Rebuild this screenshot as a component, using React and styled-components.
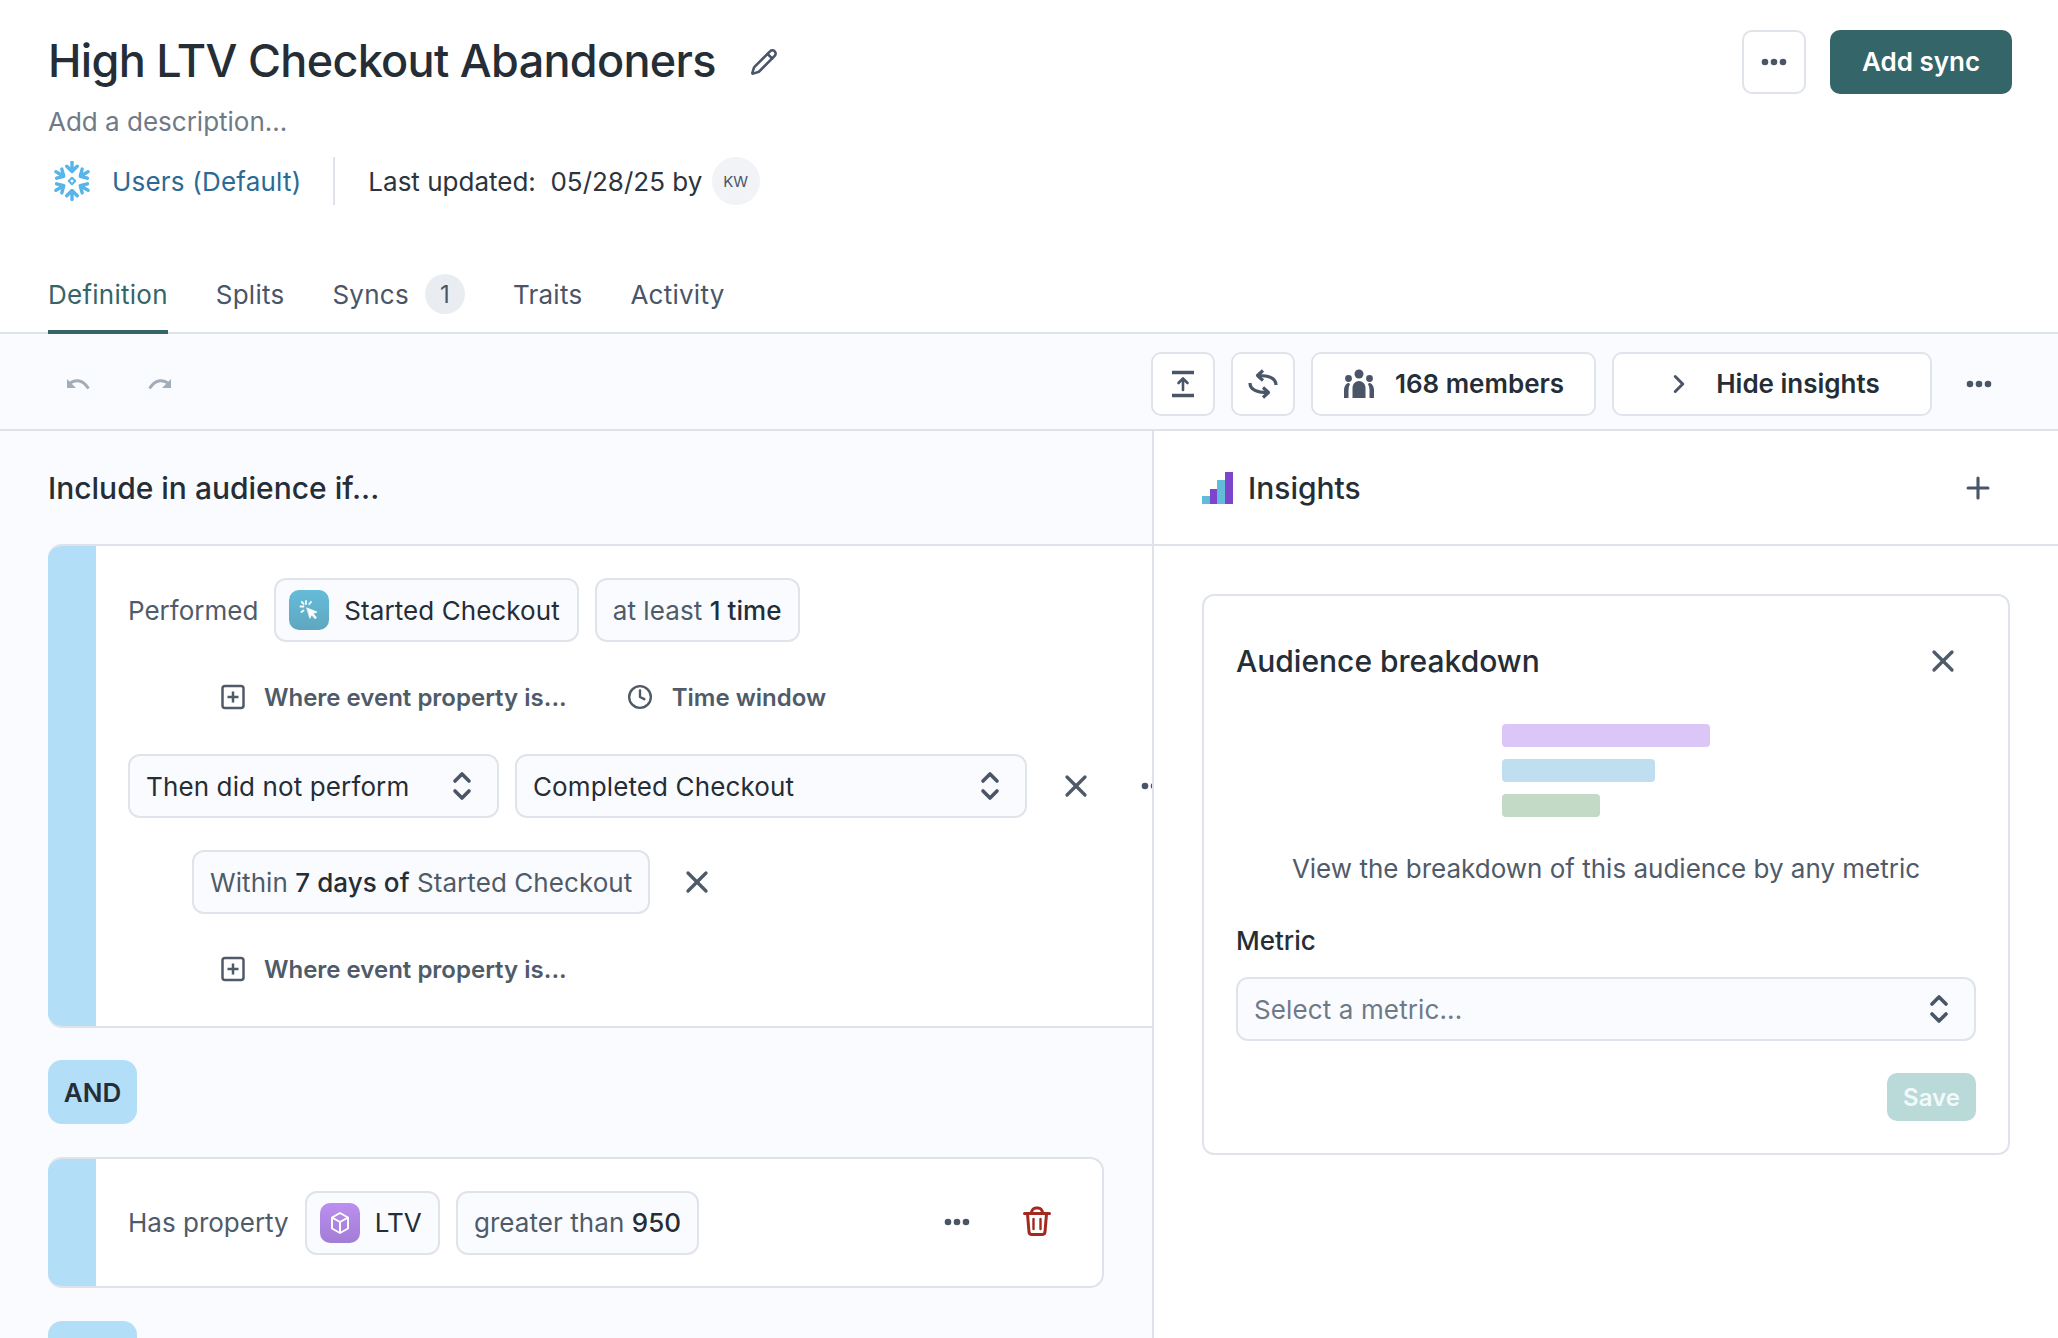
import { createGlobalStyle, styled } from "styled-components";
import { Plus, X, ChevronRight, Pencil, Clock } from "lucide-react";

const GlobalStyle = createGlobalStyle`
  html, body { margin: 0; padding: 0; background: #fff; }
  * { box-sizing: border-box; }
  body { font-family: "Inter", "Liberation Sans", sans-serif; color: #252d36; }
`;

const Page = styled.div`
  width: 2058px;
  height: 1338px;
  overflow: hidden;
  background: #fff;
`;

const Header = styled.header`
  padding: 30px 46px 0 48px;
`;

const TitleRow = styled.div`
  display: flex;
  justify-content: space-between;
  align-items: center;
  height: 64px;
`;

const TitleGroup = styled.div`
  display: flex;
  align-items: center;
  gap: 34px;
  color: #4a5568;
`;

const Title = styled.h1`
  margin: 0 0 3px;
  font-size: 45px;
  font-weight: 500;
  letter-spacing: -0.7px;
  color: #252d36;
`;

const Actions = styled.div`
  display: flex;
  gap: 24px;
`;

const OutlineButton = styled.button`
  display: flex;
  align-items: center;
  justify-content: center;
  gap: ${p => p.$gap || 0}px;
  width: ${p => p.$width || 64}px;
  height: 64px;
  padding: 0;
  border: 2.5px solid #dfe4eb;
  border-radius: 10px;
  background: #fff;
  font: 600 26px "Inter", sans-serif;
  color: #252d36;
  svg { color: #4a5568; flex: none; }
`;

const PrimaryButton = styled.button`
  width: 182px;
  height: 64px;
  padding: 0 0 2px;
  border: 0;
  border-radius: 10px;
  background: #336569;
  color: #fff;
  font: 600 26px "Inter", sans-serif;
`;

const Description = styled.div`
  margin-top: 12px;
  font-size: 26px;
  line-height: 32px;
  color: #6f7a87;
`;

const MetaRow = styled.div`
  display: flex;
  align-items: center;
  height: 48px;
  margin-top: 19px;
  font-size: 26px;
`;

const SourceLink = styled.span`
  display: flex;
  align-items: center;
  gap: 20px;
  padding-left: 4px;
  letter-spacing: 0.2px;
  color: #2b6a94;
`;

const MetaDivider = styled.span`
  width: 2px;
  height: 48px;
  margin: 0 33px 0 32px;
  background: #dfe4eb;
`;

const Updated = styled.span`
  display: flex;
  align-items: center;
  gap: 16px;
  white-space: pre;
  color: #2c343e;
`;

const Avatar = styled.span`
  display: flex;
  align-items: center;
  justify-content: center;
  width: 48px;
  height: 48px;
  margin-left: -14px;
  border-radius: 50%;
  background: #f1f3f7;
  font-size: 15px;
  color: #4a5568;
`;

const Tabs = styled.nav`
  display: flex;
  gap: 48px;
  height: 65px;
  margin: 64px -46px 0 -48px;
  padding-left: 48px;
  border-bottom: 2px solid #dee3ea;
`;

const Tab = styled.div`
  display: flex;
  align-items: center;
  gap: 16px;
  height: 65px;
  padding-bottom: 11px;
  font-size: 26px;
  letter-spacing: 0.25px;
  color: ${p => (p.$active ? "#336569" : "#4a5568")};
  border-bottom: 4px solid ${p => (p.$active ? "#336569" : "transparent")};
`;

const TabCount = styled.span`
  display: flex;
  align-items: center;
  justify-content: center;
  width: 40px;
  height: 40px;
  border-radius: 50%;
  background: #e9edf2;
  font-size: 24px;
  color: #4a5568;
`;

const Toolbar = styled.div`
  display: flex;
  align-items: center;
  height: 97px;
  padding: 4px 65px 0 66px;
  background: #fafbfe;
  border-bottom: 2px solid #dee3ea;
`;

const HistoryGroup = styled.div`
  display: flex;
  gap: 58px;
  margin-right: auto;
  color: #a3adb8;
`;

const ToolGroup = styled.div`
  display: flex;
  align-items: center;
  gap: 16px;
`;

const MoreSlot = styled.span`
  display: flex;
  margin-left: 33px;
`;

const Body = styled.div`
  display: grid;
  grid-template-columns: 1154px 1fr;
`;

const LeftPanel = styled.section`
  height: 908px;
  padding-left: 48px;
  overflow: hidden;
  background: #fafbfe;
  border-right: 2px solid #dee3ea;
`;

const PanelHeader = styled.div`
  display: flex;
  align-items: center;
  justify-content: space-between;
  height: ${p => p.$height}px;
  font-size: 30px;
  font-weight: 500;
`;

const RightPanel = styled.section`
  background: #fff;
`;

const InsightsHeader = styled(PanelHeader)`
  padding: 0 63px 0 48px;
  border-bottom: 2px solid #dee3ea;
  color: #4a5568;
`;

const InsightsTitle = styled.div`
  display: flex;
  align-items: center;
  gap: 15px;
  font-weight: 500;
  color: #252d36;
`;

const ConditionCard = styled.div`
  display: flex;
  overflow: hidden;
  background: #fff;
  border-radius: ${p => (p.$open ? "14px 0 0 14px" : "14px")};
  border: 2px solid #dee3ea;
  border-width: ${p => (p.$open ? "2px 0 2px 0" : "2px 2px 2px 0")};
  width: ${p => (p.$open ? "auto" : "1056px")};
  height: ${p => p.$height}px;
`;

const ColorStrip = styled.div`
  flex: none;
  width: 48px;
  margin: -2px 0;
  background: #b2def7;
`;

const ConditionBody = styled.div`
  flex: 1;
  min-width: 0;
  padding: 32px 0 0 32px;
`;

const Row = styled.div`
  display: flex;
  align-items: center;
  gap: 16px;
  white-space: nowrap;
  margin-top: ${p => p.$top || 0}px;
  padding-left: ${p => p.$indent || 0}px;
`;

const FieldLabel = styled.span`
  font-size: 26px;
  color: #4f5b69;
`;

const Chip = styled.div`
  display: flex;
  align-items: center;
  gap: ${p => p.$gap || 16}px;
  height: 64px;
  padding: 0 ${p => p.$right || 16}px 0 ${p => p.$left || 16}px;
  border: 2.5px solid #dfe4eb;
  border-radius: 12px;
  background: #fafbfe;
  font-size: 26px;
  letter-spacing: 0.07px;
  color: #4f5b69;
  b { font-weight: 500; color: #252d36; }
`;

const ChipName = styled.span`
  color: #252d36;
`;

const ChipIcon = styled.span`
  display: flex;
  align-items: center;
  justify-content: center;
  width: 40px;
  height: 40px;
  border-radius: 10px;
  background: linear-gradient(${p => p.$from}, ${p => p.$to});
`;

const Select = styled.div`
  display: flex;
  align-items: center;
  justify-content: space-between;
  flex: ${p => (p.$fill ? 1 : "none")};
  width: ${p => (p.$width ? `${p.$width}px` : "auto")};
  height: 64px;
  padding: 0 25px 0 16px;
  border: 2.5px solid #dfe4eb;
  border-radius: 12px;
  background: #fafbfe;
  font-size: 26px;
  letter-spacing: 0.12px;
  color: ${p => (p.$placeholder ? "#6f7a87" : "#252d36")};
`;

const HintRow = styled(Row)`
  gap: 60px;
  height: 32px;
`;

const Hint = styled.span`
  display: flex;
  align-items: center;
  gap: 19px;
  font-size: 24px;
  font-weight: 600;
  color: #4f5b69;
  svg { flex: none; }
`;

const IconSlot = styled.span`
  display: flex;
  color: #4f5b69;
  margin-left: ${p => p.$left || 0}px;
  margin-bottom: ${p => p.$lift || 0}px;
`;

const AndTag = styled.div`
  display: flex;
  align-items: center;
  justify-content: center;
  width: 89px;
  height: ${p => p.$height || 64}px;
  margin: ${p => p.$margin};
  border-radius: 14px 14px ${p => (p.$cut ? "0 0" : "14px 14px")};
  background: #b2def7;
  font-size: 26px;
  font-weight: 600;
  color: #252d36;
`;

const PropertyBody = styled(Row)`
  flex: 1;
  padding: 0 0 0 32px;
`;

const BreakdownCard = styled.div`
  height: 561px;
  margin: 48px 48px 0;
  padding: 0 32px;
  border: 2.5px solid #dfe4eb;
  border-radius: 12px;
  background: #fff;
`;

const BreakdownHeader = styled.div`
  display: flex;
  align-items: center;
  justify-content: space-between;
  height: 64px;
  margin-top: 33px;
  padding-right: 15px;
  font-size: 30px;
  font-weight: 500;
  color: #4f5b69;
  span { color: #252d36; }
`;

const Bars = styled.div`
  display: flex;
  flex-direction: column;
  gap: 12px;
  width: 208px;
  margin: 31px auto 0;
`;

const Bar = styled.div`
  width: ${p => p.$width}px;
  height: 23px;
  border-radius: 4px;
  background: ${p => p.$color};
`;

const BreakdownText = styled.p`
  margin: 36px 0 0;
  text-align: center;
  font-size: 26px;
  line-height: 32px;
  color: #4f5b69;
`;

const MetricLabel = styled.div`
  margin: 40px 0 20px;
  font-size: 26px;
  line-height: 32px;
  font-weight: 500;
  color: #252d36;
`;

const SaveRow = styled.div`
  display: flex;
  justify-content: flex-end;
  margin-top: 32px;
`;

const SaveButton = styled.button`
  width: 89px;
  height: 48px;
  padding: 0;
  border: 0;
  border-radius: 10px;
  background: #badada;
  color: #f2f9f9;
  font: 600 24px "Inter", sans-serif;
`;

function Dots() {
  return (
    <svg width="28" height="8" viewBox="0 0 28 8" fill="#4a5568">
      <circle cx="5" cy="4" r="3.3" />
      <circle cx="14" cy="4" r="3.3" />
      <circle cx="23" cy="4" r="3.3" />
    </svg>
  );
}

function Updown() {
  return (
    <svg width="20" height="30" viewBox="0 0 20 30" fill="none" stroke="#4a5568" strokeWidth="3.6" strokeLinecap="round" strokeLinejoin="round">
      <path d="M3 10l7-7 7 7M3 20l7 7 7-7" />
    </svg>
  );
}

function Snowflake() {
  const arm = "M20 1.500v8 M14.500 5.500l5.500 5.500 5.500-5.500";
  return (
    <svg width="40" height="40" viewBox="0 0 40 42" fill="none" stroke="#57b5ea" strokeWidth="3.600" strokeLinecap="round" strokeLinejoin="round">
      {[0, 60, 120, 180, 240, 300].map(a => (
        <path key={a} d={arm} transform={`rotate(${a} 20 21)`} />
      ))}
      <rect x="17.600" y="18.600" width="4.800" height="4.800" strokeWidth="2.200" transform="rotate(45 20 21)" />
    </svg>
  );
}

function UndoIcon({ flip }) {
  return (
    <svg width="24" height="12" viewBox="0 0 24 12" fill="none" style={flip ? { transform: "scaleX(-1)" } : undefined}>
      <path d="M3 6C8 1.500 16 .5 22.500 10.500" stroke="currentColor" strokeWidth="3" />
      <path d="M1 1v9h9z" fill="currentColor" />
    </svg>
  );
}

function ExportIcon() {
  return (
    <svg width="26" height="28" viewBox="0 0 26 28" fill="none" stroke="#4a5568" strokeWidth="2.600" strokeLinecap="round" strokeLinejoin="round">
      <path d="M2 2.500h22M2 25.500h22" strokeWidth="3.400" strokeLinecap="butt" />
      <path d="M13 20V8.500M8.500 13L13 8.500l4.500 4.500" />
    </svg>
  );
}

function SyncIcon() {
  return (
    <svg width="30" height="30" viewBox="0 0 30 30" fill="none" stroke="#4a5568" strokeWidth="3.200" strokeLinejoin="round">
      <path d="M28 16C28 10 22 6.500 10 6.500" />
      <path d="M15 1.500L9.500 6.500l5.500 5" />
      <path d="M2 14C2 20 8 23.500 20 23.500" />
      <path d="M15 18.500l5.500 5-5.500 5" />
    </svg>
  );
}

function PeopleIcon() {
  return (
    <svg width="32" height="30" viewBox="0 0 32 30" fill="#4a5568">
      <circle cx="16" cy="5" r="4.500" />
      <circle cx="5.500" cy="9.500" r="3.400" />
      <circle cx="26.500" cy="9.500" r="3.400" />
      <path d="M9.500 29V19c0-4 3-7 6.500-7s6.500 3 6.500 7v10z" />
      <path d="M1 29v-8c0-3 1.500-6 4-7 1 0 1.500.5 2 1-1 2-1.500 4-1.500 6v8zM31 29v-8c0-3-1.500-6-4-7-1 0-1.500.5-2 1 1 2 1.500 4 1.500 6v8z" />
    </svg>
  );
}

function InsightsIcon() {
  return (
    <svg width="31" height="32" viewBox="0 0 31 32">
      <rect x="0" y="24" width="8" height="8" fill="#62bbd9" />
      <rect x="8" y="17" width="7" height="15" fill="#7c45cb" />
      <rect x="15" y="8" width="8" height="24" fill="#62bbd9" />
      <rect x="23" y="0" width="8" height="32" fill="#7c45cb" />
    </svg>
  );
}

function ClickIcon() {
  return (
    <svg width="22" height="22" viewBox="0 0 22 22" fill="none" stroke="#fff" strokeWidth="1.800" strokeLinecap="round">
      <path d="M9 9l10 4-4 1.500 3.500 4-1.500 1.200-3.300-4L12 19z" fill="#fff" strokeWidth="0.800" strokeLinejoin="round" />
      <path d="M8 2v3M2.500 7.500h3M3.500 13l2-1.500M3.800 3l1.800 1.800M13 3l-1.700 2" />
    </svg>
  );
}

function BoxIcon() {
  return (
    <svg width="22" height="24" viewBox="0 0 22 24" fill="none" stroke="#fff" strokeWidth="2" strokeLinejoin="round">
      <path d="M11 2l8 4.500v11L11 22l-8-4.500v-11z" />
      <path d="M3 6.500l8 4.500 8-4.500M11 11v11" />
    </svg>
  );
}

function PlusBox() {
  return (
    <svg width="24" height="26" viewBox="0 0 24 26" fill="none" stroke="#4f5b69" strokeWidth="2.500" strokeLinejoin="round">
      <rect x="1.500" y="2" width="21" height="22" rx="2.500" />
      <path d="M12 7.500v11M6.500 13h11" />
    </svg>
  );
}

function TrashIcon() {
  return (
    <svg width="28" height="30" viewBox="0 0 28 30" fill="none" stroke="#a3281e" strokeWidth="3" strokeLinecap="round" strokeLinejoin="round">
      <path d="M1.500 7.500h25M8.500 7.500C8.500 4 10.500 2 13 2h2c2.500 0 4.500 2 4.500 5.500" />
      <path d="M4.500 8l1.500 18c.2 1.600 1.200 2.500 2.800 2.500h10.400c1.600 0 2.600-.9 2.800-2.500L23.500 8" />
      <path d="M10.500 13v10M17.500 13v10" strokeWidth="2.400" />
    </svg>
  );
}

export default function App() {
  return (
    <Page>
      <GlobalStyle />
      <Header>
        <TitleRow>
          <TitleGroup>
            <Title>High LTV Checkout Abandoners</Title>
            <Pencil size={28} strokeWidth={2.2} />
          </TitleGroup>
          <Actions>
            <OutlineButton><Dots /></OutlineButton>
            <PrimaryButton>Add sync</PrimaryButton>
          </Actions>
        </TitleRow>
        <Description>Add a description...</Description>
        <MetaRow>
          <SourceLink><Snowflake />Users (Default)</SourceLink>
          <MetaDivider />
          <Updated>Last updated:  05/28/25 by <Avatar>KW</Avatar></Updated>
        </MetaRow>
        <Tabs>
          <Tab $active>Definition</Tab>
          <Tab>Splits</Tab>
          <Tab>Syncs <TabCount>1</TabCount></Tab>
          <Tab>Traits</Tab>
          <Tab>Activity</Tab>
        </Tabs>
      </Header>

      <Toolbar>
        <HistoryGroup>
          <UndoIcon />
          <UndoIcon flip />
        </HistoryGroup>
        <ToolGroup>
          <OutlineButton><ExportIcon /></OutlineButton>
          <OutlineButton><SyncIcon /></OutlineButton>
          <OutlineButton $width={285} $gap={20}><PeopleIcon />168 members</OutlineButton>
          <OutlineButton $width={320} $gap={22}><ChevronRight size={30} strokeWidth={2.4} />Hide insights</OutlineButton>
        </ToolGroup>
        <MoreSlot><Dots /></MoreSlot>
      </Toolbar>

      <Body>
        <LeftPanel>
          <PanelHeader $height={113}>Include in audience if...</PanelHeader>
          <ConditionCard $open $height={484}>
            <ColorStrip />
            <ConditionBody>
              <Row>
                <FieldLabel>Performed</FieldLabel>
                <Chip $left={13} $right={17} $gap={15}>
                  <ChipIcon $from="#64bcd9" $to="#5fa7c0"><ClickIcon /></ChipIcon>
                  <ChipName>Started Checkout</ChipName>
                </Chip>
                <Chip><span>at least <b>1 time</b></span></Chip>
              </Row>
              <HintRow $top={39} $indent={93}>
                <Hint><PlusBox />Where event property is...</Hint>
                <Hint><Clock size={26} strokeWidth={2.2} />Time window</Hint>
              </HintRow>
              <Row $top={41}>
                <Select $width={371}>Then did not perform <Updown /></Select>
                <Select $width={512}>Completed Checkout <Updown /></Select>
                <IconSlot $left={15}><X size={36} strokeWidth={2.2} /></IconSlot>
                <IconSlot $left={30}><Dots /></IconSlot>
              </Row>
              <Row $top={32} $indent={64}>
                <Chip><span>Within <b>7 days of</b> Started Checkout</span></Chip>
                <IconSlot $left={13}><X size={36} strokeWidth={2.2} /></IconSlot>
              </Row>
              <HintRow $top={39} $indent={93}>
                <Hint><PlusBox />Where event property is...</Hint>
              </HintRow>
            </ConditionBody>
          </ConditionCard>
          <AndTag $margin="32px 0 33px">AND</AndTag>
          <ConditionCard $height={131}>
            <ColorStrip />
            <PropertyBody>
              <FieldLabel>Has property</FieldLabel>
              <Chip $left={13} $gap={15}>
                <ChipIcon $from="#bb8fee" $to="#a27dd6"><BoxIcon /></ChipIcon>
                <ChipName>LTV</ChipName>
              </Chip>
              <Chip><span>greater than <b>950</b></span></Chip>
              <IconSlot $left={228} $lift={2}><Dots /></IconSlot>
              <IconSlot $left={36} $lift={4}><TrashIcon /></IconSlot>
            </PropertyBody>
          </ConditionCard>
          <AndTag $margin="33px 0 0" $height={40} $cut />
        </LeftPanel>

        <RightPanel>
          <InsightsHeader $height={115}>
            <InsightsTitle><InsightsIcon />Insights</InsightsTitle>
            <Plus size={34} strokeWidth={2.2} />
          </InsightsHeader>
          <BreakdownCard>
            <BreakdownHeader>
              <span>Audience breakdown</span>
              <X size={36} strokeWidth={2.2} />
            </BreakdownHeader>
            <Bars>
              <Bar $width={208} $color="#dcc5f7" />
              <Bar $width={153} $color="#bfdff0" />
              <Bar $width={98} $color="#c3dac7" />
            </Bars>
            <BreakdownText>View the breakdown of this audience by any metric</BreakdownText>
            <MetricLabel>Metric</MetricLabel>
            <Select $placeholder>Select a metric... <Updown /></Select>
            <SaveRow><SaveButton>Save</SaveButton></SaveRow>
          </BreakdownCard>
        </RightPanel>
      </Body>
    </Page>
  );
}
